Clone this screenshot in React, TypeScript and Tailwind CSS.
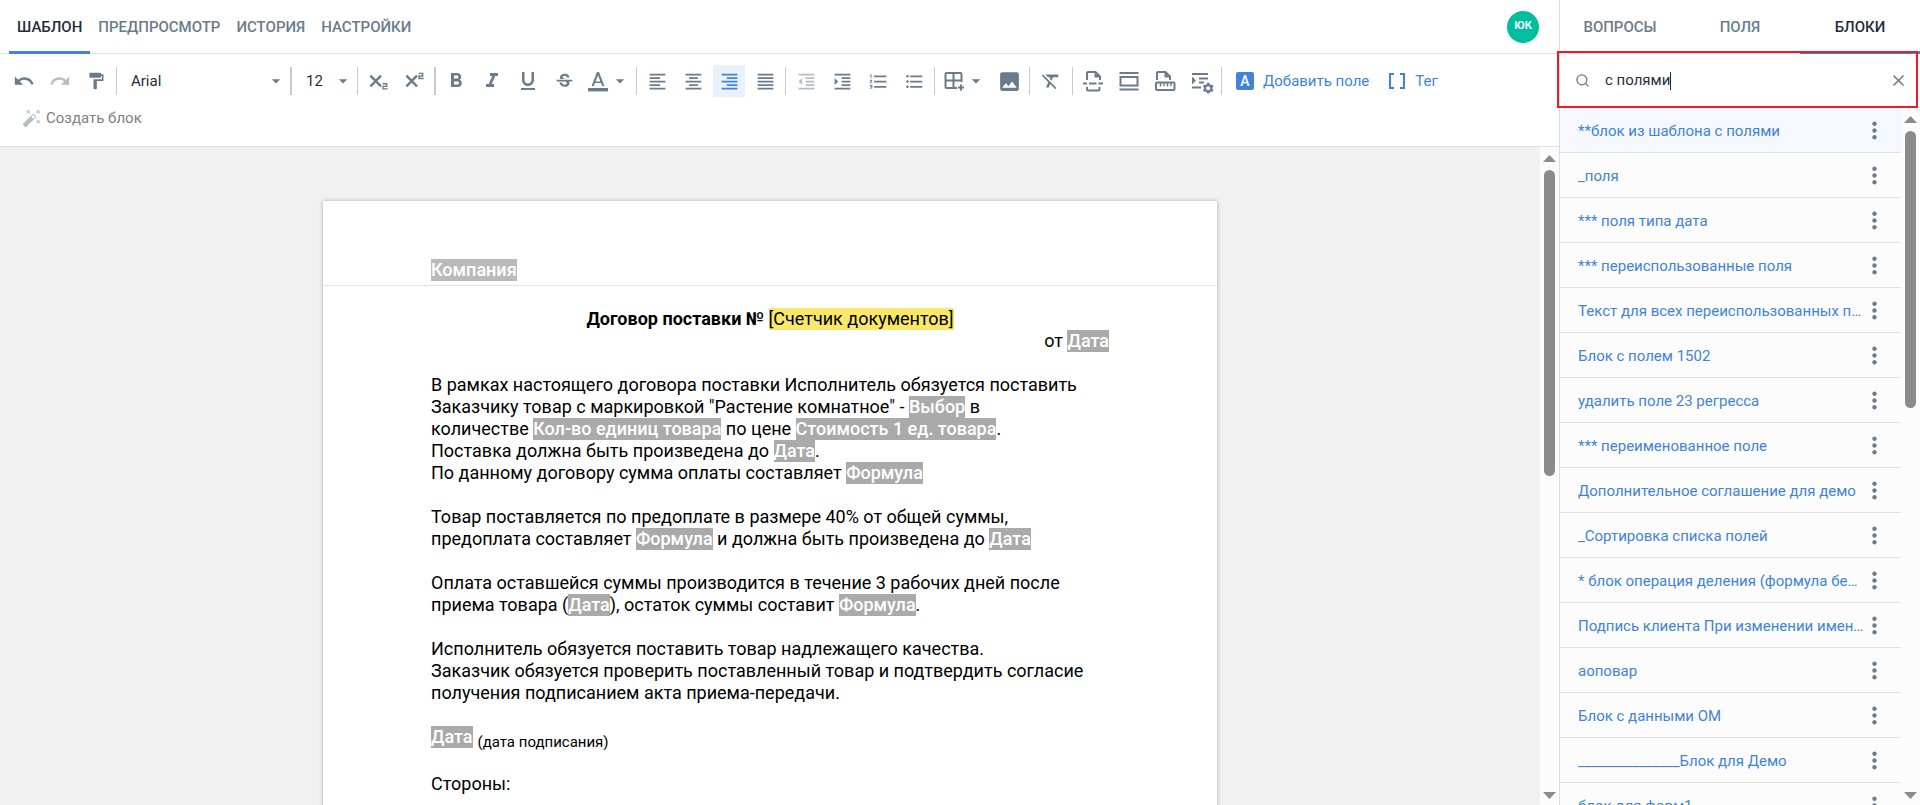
import { useState } from 'react';
import type { ReactNode } from 'react';
import {
  MdArrowDropDown,
  MdAutoFixHigh,
  MdClose,
  MdFormatAlignCenter,
  MdFormatAlignJustify,
  MdFormatAlignLeft,
  MdFormatAlignRight,
  MdFormatBold,
  MdFormatClear,
  MdFormatIndentDecrease,
  MdFormatIndentIncrease,
  MdFormatItalic,
  MdFormatListBulleted,
  MdFormatListNumbered,
  MdFormatPaint,
  MdFormatUnderlined,
  MdImage,
  MdMoreVert,
  MdRedo,
  MdSettings,
  MdStrikethroughS,
  MdUndo,
} from 'react-icons/md';
import { Search } from 'lucide-react';

const mainTabs = ['ШАБЛОН', 'ПРЕДПРОСМОТР', 'ИСТОРИЯ', 'НАСТРОЙКИ'];
const sideTabs = ['ВОПРОСЫ', 'ПОЛЯ', 'БЛОКИ'];

const blocks = [
  '**блок из шаблона с полями',
  '_поля',
  '*** поля типа дата',
  '*** переиспользованные поля',
  'Текст для всех переиспользованных п…',
  'Блок с полем 1502',
  'удалить поле 23 регресса',
  '*** переименованное поле',
  'Дополнительное соглашение для демо',
  '_Сортировка списка полей',
  '* блок операция деления (формула бе…',
  'Подпись клиента При изменении имен…',
  'аоповар',
  'Блок с данными ОМ',
  '_______________Блок для Демо',
  'блок для форм1',
];

function ToolButton({
  label,
  children,
  active = false,
  disabled = false,
  className = 'w-8',
}: {
  label: string;
  children: ReactNode;
  active?: boolean;
  disabled?: boolean;
  className?: string;
}) {
  return (
    <button
      type="button"
      aria-label={label}
      disabled={disabled}
      className={`flex h-8 shrink-0 items-center justify-center ${className} ${
        active ? 'bg-[#e9f1fc] text-[#4183d9]' : disabled ? 'text-[#b5bdc5]' : 'text-[#6b7b8b]'
      }`}
    >
      {children}
    </button>
  );
}

function Separator({ wide = false }: { wide?: boolean }) {
  return <div className={`h-7 shrink-0 bg-[#c9cbd0] ${wide ? 'w-0.5' : 'w-px'}`} />;
}

function ScriptIcon({ up = false }: { up?: boolean }) {
  return (
    <svg viewBox="0 0 24 24" className="size-[22px]" fill="none" stroke="currentColor">
      <path d="M3.7 6.2l11.6 11.600M15.300 6.200L3.700 17.800" strokeWidth="2.6" />
      <path
        d={up ? 'M17 3.7h4.500v2.800h-4v2.800h5' : 'M17 15h4.500v2.800h-4v2.800h5'}
        strokeWidth="1.5"
      />
    </svg>
  );
}

function TextColorIcon() {
  return (
    <svg viewBox="0 0 24 24" className="h-6 w-6" fill="currentColor">
      <path d="M9.6 12.6L12 6.3l2.4 6.3M11 3L5.6 17h2.2l1.1-2.9h6.2l1.1 2.9h2.2L13 3h-2z" />
      <path d="M2 19h20v3.4H2z" />
    </svg>
  );
}

function TablePlusIcon() {
  return (
    <svg viewBox="0 0 24 24" className="size-6 shrink-0" fill="none" stroke="currentColor" strokeWidth="2">
      <path d="M15 19H4.500a1 1 0 0 1-1-1V5a1 1 0 0 1 1-1H18.500a1 1 0 0 1 1 1v8M3 11.500h16M11.500 4v15" />
      <path d="M19 15.500v6M16 18.500h6" />
    </svg>
  );
}

function PageBreakIcon() {
  return (
    <svg viewBox="0 0 24 24" className="size-6" fill="none" stroke="currentColor" strokeWidth="2">
      <path d="M6 11V4a1 1 0 0 1 1-1h7.500l4.500 4.500V11" />
      <path d="M13.500 3v5.500h5.500z" fill="currentColor" stroke="none" />
      <path d="M2 14.500h4M8 14.500h7.500M17.500 14.500h4.500" />
      <path d="M6 18V20.500a1 1 0 0 0 1 1h10.500a1 1 0 0 0 1-1v-2.500" />
    </svg>
  );
}

function MarginsIcon() {
  return (
    <svg viewBox="0 0 24 24" className="size-6" fill="none" stroke="currentColor" strokeWidth="2">
      <path d="M2.500 4h19M2.500 20.500h19" />
      <rect x="3.500" y="8" width="17" height="8.500" />
    </svg>
  );
}

function RulerPageIcon() {
  return (
    <svg viewBox="0 0 24 24" className="size-6" fill="none" stroke="currentColor" strokeWidth="2">
      <path d="M4 11V4a1 1 0 0 1 1-1h7.500l4.500 4.500V11" />
      <path d="M11.500 3v5.500h5.500z" fill="currentColor" stroke="none" />
      <rect x="3" y="13.500" width="18.500" height="7.500" rx="1" />
      <path d="M7.500 13.500v4M11 13.500v3.500M14.500 13.500v4M18 13.500v3.500" strokeWidth="1.500" />
    </svg>
  );
}

function ParagraphSettingsIcon() {
  return (
    <svg viewBox="0 0 28 28" className="size-7 shrink-0" fill="none" stroke="currentColor" strokeWidth="2">
      <path d="M5 7h16M12 11.500h9M12 15.500h5M5 20.500h9" />
      <path d="M5 9.500v8l4-4z" fill="currentColor" stroke="none" />
      <g transform="translate(14.500 14.500) scale(0.56)">
        <MdSettings size={24} />
      </g>
    </svg>
  );
}

function Toolbar() {
  return (
    <div className="flex flex-col gap-[5px] border-b border-[#e2e2e2] pt-[11px] pb-3 pl-2">
      <div className="flex flex-wrap items-center gap-1">
        <ToolButton label="Отменить"><MdUndo size={22} /></ToolButton>
        <ToolButton label="Повторить" disabled><MdRedo size={22} /></ToolButton>
        <ToolButton label="Формат по образцу"><MdFormatPaint size={20} /></ToolButton>
        <Separator />
        <div className="relative w-[165px]">
          <select
            aria-label="Шрифт"
            className="h-8 w-full appearance-none bg-transparent pl-2.5 text-[15px] text-[#1f2d3d]"
          >
            <option>Arial</option>
          </select>
          <MdArrowDropDown size={20} className="pointer-events-none absolute top-1.5 right-0 text-[#6b7b8b]" />
        </div>
        <Separator wide />
        <div className="relative w-[57px]">
          <select
            aria-label="Размер шрифта"
            className="h-8 w-full appearance-none bg-transparent pl-2.5 text-[15px] text-[#1f2d3d]"
          >
            <option>12</option>
          </select>
          <MdArrowDropDown size={20} className="pointer-events-none absolute top-1.5 right-0 text-[#6b7b8b]" />
        </div>
        <Separator />
        <ToolButton label="Подстрочный"><ScriptIcon /></ToolButton>
        <ToolButton label="Надстрочный"><ScriptIcon up /></ToolButton>
        <Separator wide />
        <ToolButton label="Жирный"><MdFormatBold size={24} /></ToolButton>
        <ToolButton label="Курсив"><MdFormatItalic size={24} /></ToolButton>
        <ToolButton label="Подчёркнутый"><MdFormatUnderlined size={24} /></ToolButton>
        <ToolButton label="Зачёркнутый"><MdStrikethroughS size={21} /></ToolButton>
        <ToolButton label="Цвет текста" className="w-12">
          <TextColorIcon />
          <MdArrowDropDown size={20} />
        </ToolButton>
        <Separator />
        <ToolButton label="По левому краю"><MdFormatAlignLeft size={21} /></ToolButton>
        <ToolButton label="По центру"><MdFormatAlignCenter size={21} /></ToolButton>
        <ToolButton label="По правому краю" active><MdFormatAlignRight size={21} /></ToolButton>
        <ToolButton label="По ширине"><MdFormatAlignJustify size={21} /></ToolButton>
        <Separator />
        <ToolButton label="Уменьшить отступ" disabled><MdFormatIndentDecrease size={21} /></ToolButton>
        <ToolButton label="Увеличить отступ"><MdFormatIndentIncrease size={21} /></ToolButton>
        <ToolButton label="Нумерованный список"><MdFormatListNumbered size={21} /></ToolButton>
        <ToolButton label="Маркированный список"><MdFormatListBulleted size={21} /></ToolButton>
        <Separator />
        <ToolButton label="Таблица" className="w-[50px]">
          <TablePlusIcon />
          <MdArrowDropDown size={20} />
        </ToolButton>
        <ToolButton label="Изображение"><MdImage size={25} /></ToolButton>
        <Separator />
        <ToolButton label="Очистить формат" className="w-[34px]"><MdFormatClear size={22} /></ToolButton>
        <Separator />
        <ToolButton label="Разрыв страницы"><PageBreakIcon /></ToolButton>
        <ToolButton label="Поля страницы"><MarginsIcon /></ToolButton>
        <ToolButton label="Колонтитулы"><RulerPageIcon /></ToolButton>
        <ToolButton label="Параметры абзаца"><ParagraphSettingsIcon /></ToolButton>
        <Separator />
        <button type="button" className="flex h-8 items-center gap-[9px] pl-2.5 text-[15px] text-[#4183d9]">
          <span className="flex size-[18px] items-center justify-center rounded-xs bg-[#4183d9] text-sm font-medium text-white">
            A
          </span>
          Добавить поле
        </button>
        <button type="button" className="flex h-8 items-center gap-1.5 pl-3 text-[15px] text-[#4183d9]">
          <svg viewBox="0 0 24 24" className="size-6" fill="currentColor">
            <path d="M15 4V6H18V18H15V20H20V4M4 4V20H9V18H6V6H9V4H4Z" />
          </svg>
          Тег
        </button>
      </div>
      <button type="button" disabled className="flex h-8 items-center gap-1 self-start pl-3.5 text-[15px] text-[#808080]">
        <MdAutoFixHigh size={20} className="text-[#b5bdc5]" />
        Создать блок
      </button>
    </div>
  );
}

function Field({ children }: { children: ReactNode }) {
  return <span className="inline-block bg-[#aaaaaa] font-medium text-white">{children}</span>;
}

function ScrollTrack({ children }: { children: ReactNode }) {
  return (
    <div className="flex w-[19px] shrink-0 flex-col items-center justify-between bg-[#fcfcfc] pt-2 pb-1.5">
      <div className="flex min-h-0 flex-1 flex-col items-center gap-2">
        <svg viewBox="0 0 13 7" className="h-[7px] w-[13px]" fill="#8b8b8b"><path d="M0 7L6.500 0L13 7z" /></svg>
        {children}
      </div>
      <svg viewBox="0 0 13 7" className="h-[7px] w-[13px]" fill="#8b8b8b"><path d="M0 0L6.500 7L13 0z" /></svg>
    </div>
  );
}

function TemplatePage() {
  return (
    <article className="mx-auto mt-[54px] w-[894px] bg-white text-[18px] leading-[22px] text-black shadow-[0_0_4px_rgba(0,0,0,0.3)]">
      <header className="border-b border-[#e4e4e4] px-[108px] pt-[58px] pb-1">
        <div className="opacity-80"><Field>Компания</Field></div>
      </header>
      <div className="px-[108px] pt-[22px] pb-20">
        <p className="text-center">
          <b>Договор поставки №</b>{' '}
          <span className="inline-block bg-[#fbe869]">[Счетчик документов]</span>
        </p>
        <p className="mb-[22px] text-right">от <Field>Дата</Field></p>
        <p>
          В рамках настоящего договора поставки Исполнитель обязуется поставить<br />
          Заказчику товар с маркировкой "Растение комнатное" - <Field>Выбор</Field> в<br />
          количестве <Field>Кол-во единиц товара</Field> по цене <Field>Стоимость 1 ед. товара</Field>.
        </p>
        <p>Поставка должна быть произведена до <Field>Дата</Field>.</p>
        <p className="mb-[22px]">По данному договору сумма оплаты составляет <Field>Формула</Field></p>
        <p className="mb-[22px]">
          Товар поставляется по предоплате в размере 40% от общей суммы,<br />
          предоплата составляет <Field>Формула</Field> и должна быть произведена до <Field>Дата</Field>
        </p>
        <p className="mb-[22px]">
          Оплата оставшейся суммы производится в течение 3 рабочих дней после<br />
          приема товара (<Field>Дата</Field>), остаток суммы составит <Field>Формула</Field>.
        </p>
        <p>Исполнитель обязуется поставить товар надлежащего качества.</p>
        <p className="mb-[22px]">
          Заказчик обязуется проверить поставленный товар и подтвердить согласие
          получения подписанием акта приема-передачи.
        </p>
        <p className="mb-[22px] flex h-[25px] items-start gap-[5px]">
          <Field>Дата</Field>
          <span className="pt-[5px] text-[15px]">(дата подписания)</span>
        </p>
        <p>Стороны:</p>
      </div>
    </article>
  );
}

function SidePanel() {
  const [query, setQuery] = useState('с полями');

  return (
    <aside className="relative flex w-[361px] shrink-0 flex-col border-l border-[#dcdcdc] bg-[#fcfcfc]">
      <nav className="flex h-[54px] shrink-0 border-b border-[#e2e2e2] bg-white">
        {sideTabs.map((tab) => (
          <button
            key={tab}
            type="button"
            className={`-mb-px flex-1 border-b-3 pt-1 text-[15px] font-medium ${
              tab === 'БЛОКИ' ? 'border-[#4183d9] text-[#1f2d3d]' : 'border-transparent text-[#6b7b8b]'
            }`}
          >
            {tab}
          </button>
        ))}
      </nav>

      {/* Поиск */}
      <div className="flex h-[54px] shrink-0 items-center border-b border-[#e2e2e2] bg-white pr-3 pl-[15px]">
        <Search size={15} strokeWidth={2} className="text-[#6b7b8b]" />
        <input
          aria-label="Поиск блоков"
          value={query}
          onChange={(e) => setQuery(e.target.value)}
          className="ml-[15px] [field-sizing:content] text-[15px] text-[#1f2d3d] outline-none"
        />
        <span className="h-[18px] w-px bg-[#1f2d3d]" />
        <button type="button" aria-label="Очистить" onClick={() => setQuery('')} className="ml-auto text-[#6b7b8b]">
          <MdClose size={19} />
        </button>
      </div>
      <div className="pointer-events-none absolute top-[51px] right-0.5 -left-[3px] h-[57px] border-2 border-[#ee1c25]" />

      <div className="flex min-h-0 flex-1">
        <ul className="min-w-0 flex-1 overflow-hidden">
          {blocks.map((name, i) => (
            <li
              key={name}
              className={`flex h-[45px] items-center border-b border-[#e2e2e2] pr-[13px] pl-[18px] ${
                i === 0 ? 'bg-[#f5f9ff]' : ''
              }`}
            >
              <a href="#" className="min-w-0 flex-1 truncate pt-0.5 text-[15px] text-[#4183d9]">{name}</a>
              <button type="button" aria-label="Меню блока" className="-ml-1 text-[#6b7b8b]">
                <MdMoreVert size={27} />
              </button>
            </li>
          ))}
        </ul>
        <ScrollTrack>
          <div className="h-[41%] w-[11px] rounded-full bg-[#8b8b8b]" />
        </ScrollTrack>
      </div>
    </aside>
  );
}

export default function App() {
  return (
    <div className="flex h-screen overflow-hidden bg-white font-[Roboto,sans-serif]">
      <main className="flex min-w-0 flex-1 flex-col">
        <div className="flex h-[54px] shrink-0 items-stretch justify-between border-b border-[#e2e2e2] pr-5 pl-[9px]">
          <nav className="flex">
            {mainTabs.map((tab, i) => (
              <button
                key={tab}
                type="button"
                className={`-mb-px border-b-3 px-2 pt-1 text-[15px] font-medium ${
                  i === 0 ? 'border-[#4183d9] text-[#1f2d3d]' : 'border-transparent text-[#6b7b8b]'
                }`}
              >
                {tab}
              </button>
            ))}
          </nav>
          <button
            type="button"
            className="flex size-8 items-center justify-center self-center rounded-full bg-[#00bf9c] text-[11px] font-bold text-white"
          >
            ЮК
          </button>
        </div>
        <Toolbar />
        <div className="flex min-h-0 flex-1 bg-[#f1f1f1]">
          <div className="min-w-0 flex-1 overflow-hidden">
            <TemplatePage />
          </div>
          <ScrollTrack>
            <div className="h-[48%] w-[11px] rounded-full bg-[#8b8b8b]" />
          </ScrollTrack>
        </div>
      </main>
      <SidePanel />
    </div>
  );
}
